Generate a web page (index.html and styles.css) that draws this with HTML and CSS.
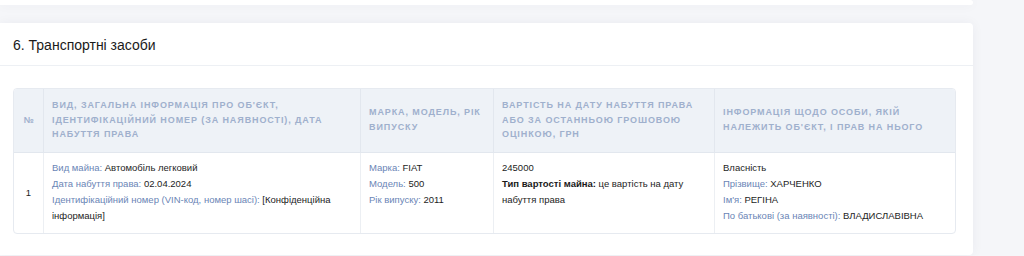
FILE: index.html
```html
<!DOCTYPE html>
<html lang="uk">
<head>
<meta charset="utf-8">
<link rel="stylesheet" href="styles.css">
</head>
<body>
<div class="page">
  <div class="card card-prev"></div>
  <div class="card">
    <div class="card-head">6. Транспортні засоби</div>
    <div class="card-body">
      <table class="tbl">
        <colgroup>
          <col class="c1"><col class="c2"><col class="c3"><col class="c4"><col class="c5">
        </colgroup>
        <thead>
          <tr>
            <th class="num">№</th>
            <th>Вид, загальна інформація про об'єкт, ідентифікаційний номер (за наявності), дата набуття права</th>
            <th>Марка, модель, рік випуску</th>
            <th>Вартість на дату набуття права або за останньою грошовою оцінкою, грн</th>
            <th>Інформація щодо особи, якій належить об'єкт, і прав на нього</th>
          </tr>
        </thead>
        <tbody>
          <tr>
            <td class="num">1</td>
            <td>
              <div><span class="lbl">Вид майна:</span> Автомобіль легковий</div>
              <div><span class="lbl">Дата набуття права:</span> 02.04.2024</div>
              <div><span class="lbl">Ідентифікаційний номер (VIN-код, номер шасі):</span> [Конфіденційна інформація]</div>
            </td>
            <td>
              <div><span class="lbl">Марка:</span> FIAT</div>
              <div><span class="lbl">Модель:</span> 500</div>
              <div><span class="lbl">Рік випуску:</span> 2011</div>
            </td>
            <td>
              <div>245000</div>
              <div><b>Тип вартості майна:</b> це вартість на дату набуття права</div>
            </td>
            <td>
              <div>Власність</div>
              <div><span class="lbl">Прізвище:</span> ХАРЧЕНКО</div>
              <div><span class="lbl">Ім'я:</span> РЕГІНА</div>
              <div><span class="lbl">По батькові (за наявності):</span> ВЛАДИСЛАВІВНА</div>
            </td>
          </tr>
        </tbody>
      </table>
    </div>
  </div>
</div>
</body>
</html>
```
FILE: styles.css
```css
* { box-sizing: border-box; }
html, body { margin: 0; padding: 0; }
body {
  background: #f5f6f9;
  font-family: "Liberation Sans", Arial, Helvetica, sans-serif;
  color: #1f1f1f;
  width: 1024px;
  height: 256px;
  overflow: hidden;
}
.page {
  width: 973px;
}
.card {
  background: #fff;
  border-radius: 0 4px 4px 0;
  box-shadow: 0 0 12px rgba(30, 40, 70, 0.05);
}
.card-prev {
  height: 5px;
  margin-bottom: 18px;
}
.card-head {
  height: 43px;
  padding: 0 13px;
  display: flex;
  align-items: center;
  padding-top: 1px;
  font-size: 14px;
  color: #1a1a1a;
  border-bottom: 1px solid #edf0f4;
}
.card-body {
  padding: 22px 17px 21px 13px;
}
.tbl {
  width: 943px;
  border-collapse: separate;
  border-spacing: 0;
  table-layout: fixed;
  border: 1px solid #e6eaf0;
  border-radius: 4px;
  overflow: hidden;
  font-size: 9.5px;
}
.c1 { width: 29px; }
.c2 { width: 317px; }
.c3 { width: 133px; }
.c4 { width: 221px; }
.c5 { width: 241px; }
.tbl th {
  background: #eef2f7;
  color: #9fb0cd;
  font-weight: bold;
  text-transform: uppercase;
  letter-spacing: 0.9px;
  font-size: 9px;
  line-height: 14.6px;
  text-align: left;
  vertical-align: middle;
  padding: 9px 8px 10px;
  border-left: 1px solid #e2e7ee;
  border-bottom: 1px solid #e2e7ee;
  height: 62px;
}
.tbl th:first-child, .tbl td:first-child { border-left: none; }
.tbl th.num {
  text-align: center;
  padding: 0;
  letter-spacing: 0;
}
.tbl td {
  vertical-align: top;
  padding: 7px 8px 8px;
  line-height: 16px;
  border-left: 1px solid #eceff3;
  color: #1d1d1d;
  height: 80px;
}
.tbl td.num {
  vertical-align: middle;
  text-align: center;
  padding: 0;
}
.lbl { color: #6a85b6; }
.tbl b { font-weight: bold; color: #1a1a1a; }
```
